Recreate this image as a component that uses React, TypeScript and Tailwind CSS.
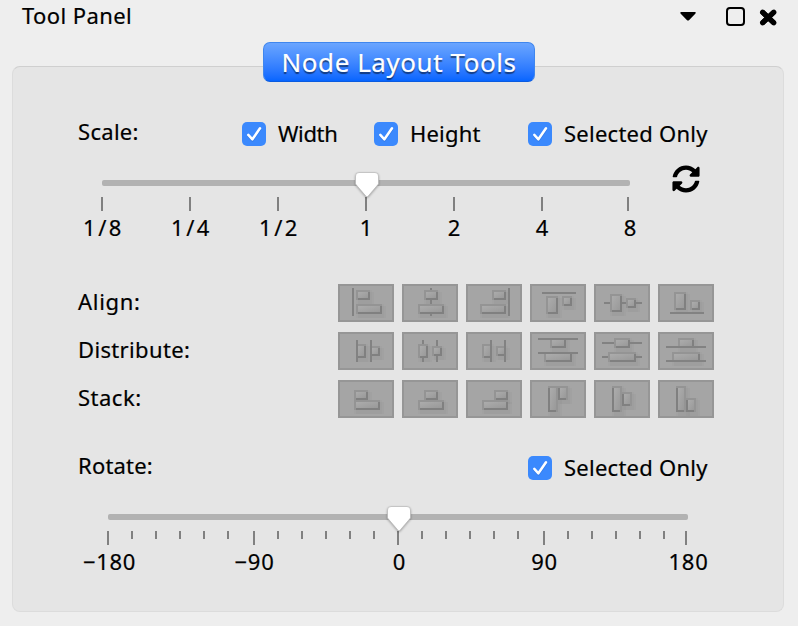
import React from "react";
import { FaSyncAlt } from "react-icons/fa";

type Rect = [number, number, number, number];
type Icon = { name: string; boxes: Rect[]; lines?: Rect[]; over?: boolean; shadeLeft?: boolean };

const alignIcons: Icon[] = [
  { name: "Align left", lines: [[7, 2, 1, 14]], boxes: [[9, 3, 7, 5], [9, 10, 13, 5]] },
  { name: "Align center", lines: [[14, 2, 1, 14]], boxes: [[11, 3, 7, 5], [8, 10, 13, 5]] },
  { name: "Align right", lines: [[21, 2, 1, 14]], boxes: [[13, 3, 7, 5], [7, 10, 13, 5]] },
  { name: "Align top", lines: [[6, 4, 17, 1]], boxes: [[8, 6, 6, 9], [16, 6, 5, 5]] },
  { name: "Align middle", lines: [[5, 9, 19, 1]], boxes: [[8, 5, 6, 9], [16, 7, 5, 5]] },
  { name: "Align bottom", lines: [[6, 14, 17, 1]], boxes: [[8, 4, 6, 9], [16, 8, 5, 5]] },
];

const distributeIcons: Icon[] = [
  { name: "Distribute left", over: true, lines: [[9, 4, 1, 11], [16, 4, 1, 11]], boxes: [[9, 6, 5, 7], [16, 7, 5, 5]] },
  { name: "Distribute center", lines: [[10, 4, 1, 11], [17, 4, 1, 11]], boxes: [[8, 6, 5, 7], [15, 7, 5, 5]] },
  { name: "Distribute right", over: true, lines: [[12, 4, 1, 11], [19, 4, 1, 11]], boxes: [[8, 6, 5, 7], [15, 7, 5, 5]] },
  { name: "Distribute top", over: true, lines: [[4, 3, 20, 1], [4, 10, 20, 1]], boxes: [[10, 3, 8, 5], [7, 10, 14, 5]] },
  { name: "Distribute middle", lines: [[4, 5, 20, 1], [4, 12, 20, 1]], boxes: [[10, 3, 8, 5], [7, 10, 14, 5]] },
  { name: "Distribute bottom", over: true, lines: [[4, 7, 20, 1], [4, 14, 20, 1]], boxes: [[10, 3, 8, 5], [7, 10, 14, 5]] },
];

const stackIcons: Icon[] = [
  { name: "Stack left", boxes: [[8, 5, 7, 5], [8, 10, 13, 5]] },
  { name: "Stack center", boxes: [[11, 5, 7, 5], [8, 10, 13, 5]] },
  { name: "Stack right", boxes: [[14, 5, 7, 5], [8, 10, 13, 5]] },
  { name: "Stack top", shadeLeft: true, boxes: [[9, 3, 5, 13], [14, 3, 5, 7]] },
  { name: "Stack middle", shadeLeft: true, boxes: [[9, 3, 5, 13], [14, 6, 5, 7]] },
  { name: "Stack bottom", shadeLeft: true, boxes: [[9, 3, 5, 13], [14, 9, 5, 7]] },
];

function IconButton({ icon }: { icon: Icon }) {
  const lines = (icon.lines ?? []).map(([x, y, w, h], i) => (
    <rect key={i} x={x} y={y} width={w} height={h} fill="#828282" />
  ));
  return (
    <button aria-label={icon.name} className="h-[38px] w-14 bg-[#a5a5a5]">
      <svg viewBox="0 0 28 19" className="block h-[38px] w-14" shapeRendering="crispEdges">
        <defs>
          <linearGradient id="face" x1="0" y1="0" x2="1" y2="1">
            <stop offset="0" stopColor="#acacac" />
            <stop offset="1" stopColor="#999999" />
          </linearGradient>
        </defs>
        <rect x="0.5" y="0.5" width="27" height="18" fill="none" stroke="#969696" />
        {icon.boxes.map(([x, y, w, h], i) => (
          <g key={i} fill="#808080">
            <rect x={x + 1} y={y + 1} width={w + 1} height={h + 1} fillOpacity=".1" />
            <rect x={x} y={y} width={w + 1} height={h + 2} fillOpacity=".07" />
          </g>
        ))}
        {!icon.over && lines}
        {icon.boxes.map(([x, y, w, h], i) => (
          <g key={i}>
            <rect x={x} y={y} width={w} height={h} fill="#949494" />
            <rect x={x + 1} y={y + 1} width={w - 1} height={h - 1} fill={icon.shadeLeft ? "#949494" : "#808080"} />
            {icon.shadeLeft && (
              <>
                <rect x={x} y={y + 1} width={1} height={h - 1} fill="#808080" />
                <rect x={x} y={y + h - 1} width={w - 1} height={1} fill="#808080" />
              </>
            )}
            <rect x={x + 1} y={y + 1} width={w - 2} height={h - 2} fill="url(#face)" />
          </g>
        ))}
        {icon.over && lines}
      </svg>
    </button>
  );
}

function IconRow({ label, spacing, icons }: { label: string; spacing: string; icons: Icon[] }) {
  return (
    <div className="flex h-12 items-start justify-between">
      <span className={`leading-[34px] ${spacing}`}>{label}</span>
      <div className="flex gap-2">
        {icons.map((icon) => (
          <IconButton key={icon.name} icon={icon} />
        ))}
      </div>
    </div>
  );
}

function Check({ label, className }: { label: string; className: string }) {
  return (
    <label className={`flex items-center gap-3 ${className}`}>
      <span className="h-6 w-6 shrink-0 rounded-[5px] bg-[#3b89fd]">
        <svg viewBox="0 0 24 24" className="block h-6 w-6">
          <path d="M6.300 13.900 10.400 18.500 18 7.500" fill="none" stroke="#1c5fc4" strokeOpacity=".35" strokeWidth="2.400" strokeLinecap="round" strokeLinejoin="round" />
          <path d="M6.300 12.900 10.400 17.300 18 6.300" fill="none" stroke="#fff" strokeWidth="2.500" strokeLinecap="round" strokeLinejoin="round" />
        </svg>
      </span>
      <span className="-mt-0.5 leading-6">{label}</span>
    </label>
  );
}

function Thumb() {
  return (
    <svg viewBox="0 0 30 32" className="h-8 w-[30px] drop-shadow-[0_1px_1px_rgba(0,0,0,0.3)]">
      <path d="M7 3.500h16a3.500 3.500 0 0 1 3.500 3.500v8L16 27.300a1.300 1.300 0 0 1-2 0L3.500 15v-8A3.500 3.500 0 0 1 7 3.500z" fill="#fff" stroke="#b5b5b5" strokeWidth=".7" />
    </svg>
  );
}

function Track({ className }: { className: string }) {
  return (
    <div className={`relative h-1.5 rounded-[2px] bg-[#b2b2b2] ${className}`}>
      <div className="absolute -top-[11px] left-1/2 -ml-[14px]">
        <Thumb />
      </div>
    </div>
  );
}

const scaleLabels = ["1/8", "1/4", "1/2", "1", "2", "4", "8"];

export default function App() {
  return (
    <div className="h-[626px] w-[798px] overflow-hidden bg-[#eeeeee] font-['Noto_Sans',sans-serif] text-[22px] text-black [-webkit-text-stroke:0.2px]">
      <header className="flex h-[42px] items-start justify-between pl-[22px] pr-[20px]">
        <h1 className="leading-[30px] tracking-[0.4px]">Tool Panel</h1>
        <svg viewBox="0 0 100 24" className="mt-1 h-6 w-[100px]">
          <path d="M3 8h14.200q1 .4.3 1.400l-6.300 6.500q-1.200 1-2.400 0L2.500 9.400q-.7-1 .5-1.400z" />
          <rect x="49" y="4" width="17" height="17" rx="3" fill="none" stroke="#000" strokeWidth="2" />
          <path d="M84 7.700 96.400 19.300M96.400 7.700 84 19.300" fill="none" stroke="#000" strokeWidth="5.200" />
          <path d="M84.500 8.200 95.900 18.800M95.900 8.200 84.500 18.800" fill="none" stroke="#000" strokeWidth="5" strokeLinecap="round" />
        </svg>
      </header>
      <div className="relative z-10 flex justify-center">
        <button className="h-10 w-[272px] rounded-[7px] border border-[#3f86ee] border-b-[#0a5be0] bg-linear-to-b from-[#6aa5ff] to-[#0565ff] text-[26px] leading-[38px] tracking-[0.550px] text-white [text-shadow:0_2px_1px_rgba(0,0,0,0.5)]">
          Node Layout Tools
        </button>
      </div>
      <main className="-mt-4 ml-3 h-[546px] w-[772px] rounded-[8px] border border-[#dcdcdc] border-t-[#cfcfcf] bg-[#e5e5e5] pl-[65px] pr-[69px] pt-[45px]">
        <section className="h-[172px]">
          <div className="flex h-11 items-center">
            <span className="-mt-1.5 w-[164px] tracking-[0.300px]">Scale:</span>
            <Check label="Width" className="w-[132px] tracking-[-0.350px]" />
            <Check label="Height" className="w-[154px] tracking-[0.200px]" />
            <Check label="Selected Only" className="whitespace-nowrap tracking-[0.250px]" />
          </div>
          <div className="flex">
            <div className="w-[594px] shrink-0 pt-6">
              <Track className="ml-6 w-[528px]" />
              <div className="ml-[23px] mt-[11px] flex h-[14px]">
                {scaleLabels.map((label, i) => (
                  <div key={label} className={i === 5 ? "w-[86px] shrink-0 border-l-2 border-[#808080]" : i === 6 ? "w-0.5 shrink-0 bg-[#808080]" : "w-[88px] shrink-0 border-l-2 border-[#808080]"} />
                ))}
              </div>
              <div className="-ml-5 mt-[3px] flex w-[616px] leading-[26px]">
                {scaleLabels.map((label, i) => (
                  <span key={label} className={i < 3 ? "w-[88px] pl-[3px] text-center tracking-[2.500px]" : "w-[88px] text-center"}>{label}</span>
                ))}
              </div>
            </div>
            <FaSyncAlt className="mt-[9px] h-7 w-7 shrink-0" />
          </div>
        </section>
        <section className="h-[160px]">
          <IconRow label="Align:" spacing="tracking-[0.700px]" icons={alignIcons} />
          <IconRow label="Distribute:" spacing="tracking-[0.350px]" icons={distributeIcons} />
          <IconRow label="Stack:" spacing="tracking-[0.500px]" icons={stackIcons} />
        </section>
        <section>
          <div className="flex h-12 items-center">
            <span className="-mt-1.5 w-[450px] tracking-[0.200px]">Rotate:</span>
            <Check label="Selected Only" className="whitespace-nowrap tracking-[0.250px]" />
          </div>
          <Track className="ml-[30px] mt-[22px] w-[580px]" />
          <div className="ml-[29px] mt-[11px] flex h-[14px]">
            {Array.from({ length: 25 }, (_, i) => (
              <div key={i} className={i === 5 || i === 17 ? "w-[26px] shrink-0" : i === 23 ? "w-[22px] shrink-0" : "w-6 shrink-0"}>
                <div className={i % 6 === 0 ? "h-[14px] w-0.5 bg-[#808080]" : "h-2 w-0.5 bg-[#808080]"} />
              </div>
            ))}
          </div>
          <div className="-ml-[41px] mt-[3px] flex w-[725px] leading-[26px] tracking-[0.700px]">
            {["−180", "−90", "0", "90", "180"].map((label, i) => (
              <span key={label} className={i === 4 ? "w-[143px] shrink-0 text-center" : "w-[145px] shrink-0 text-center"}>{label}</span>
            ))}
          </div>
        </section>
      </main>
    </div>
  );
}
